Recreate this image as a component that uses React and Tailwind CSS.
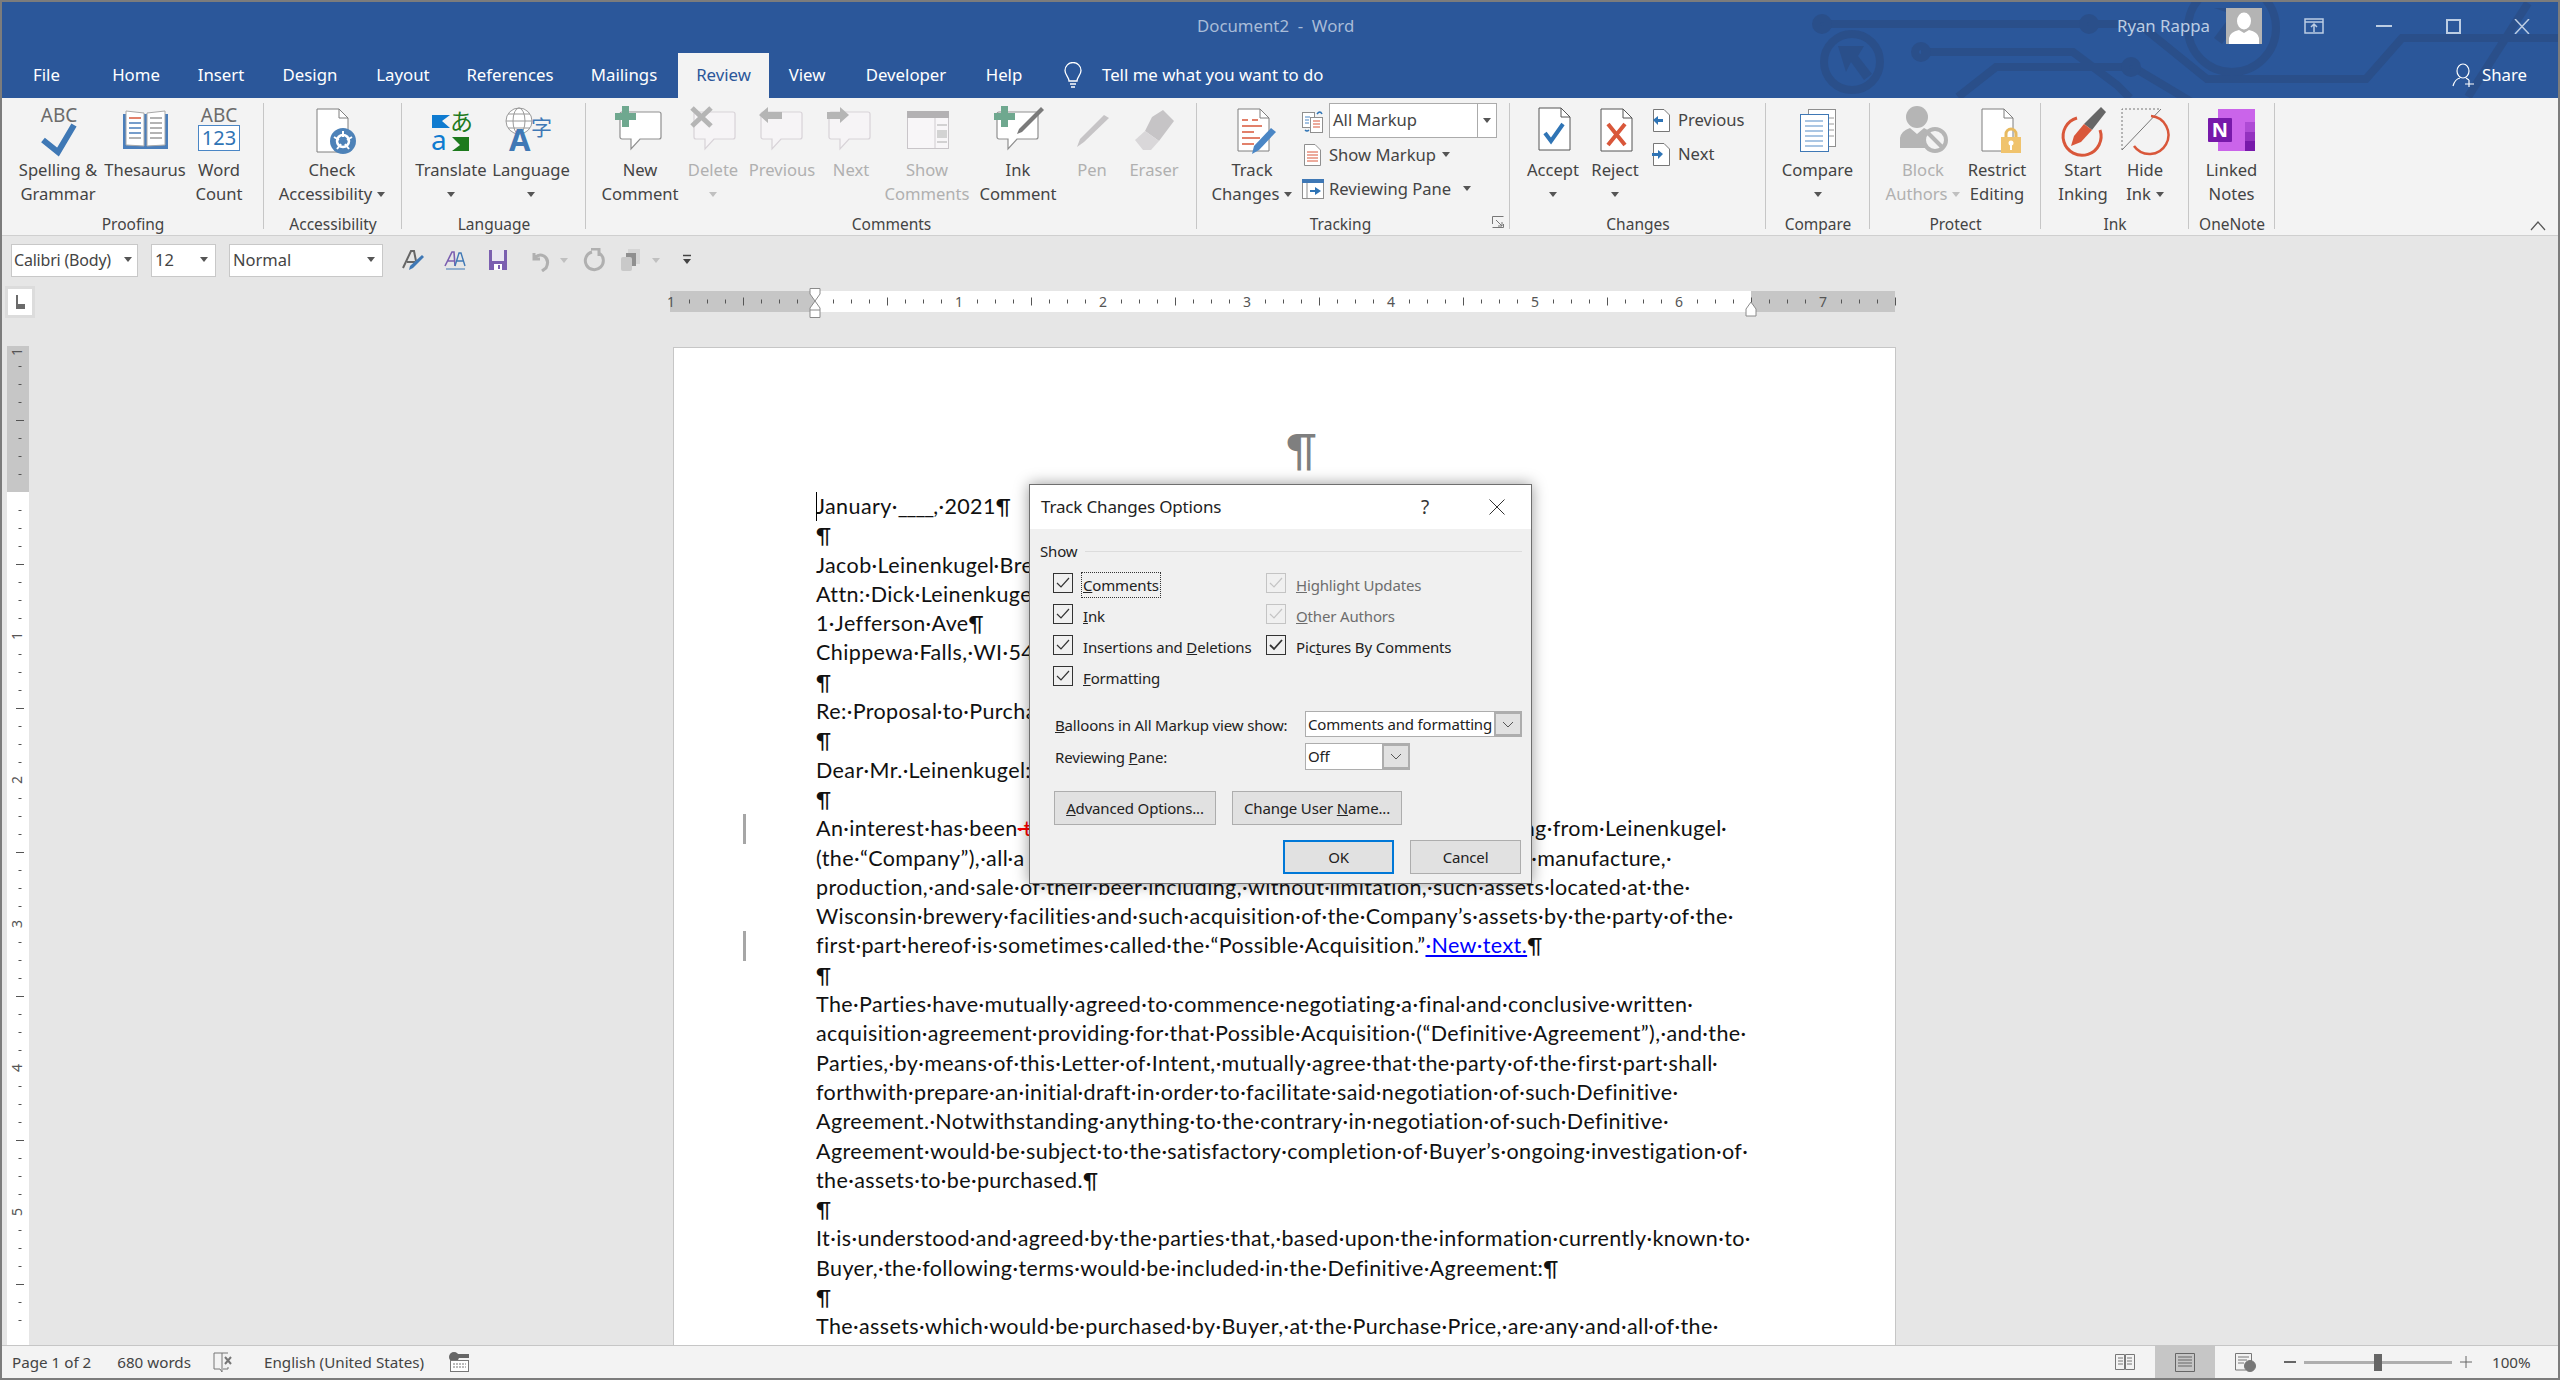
import React from "react";

const Arrow = ({ c = "#555" }) => (
    <svg width="8" height="5" viewBox="0 0 8 5" className="inline-block align-middle">
        <path d="M0 0H8L4 5Z" fill={c} />
    </svg>
);

const Ico = ({ children }) => (
    <svg width="56" height="56" viewBox="0 0 56 56" className="overflow-visible">
        {children}
    </svg>
);

const Page = ({ x, y, w, h, stroke = "#7f7f7f", fill = "#fff" }) => (
    <g>
        <path d={`M${x} ${y}H${x + w - 9}L${x + w} ${y + 9}V${y + h}H${x}Z`} fill={fill} stroke={stroke} strokeWidth="1" />
        <path d={`M${x + w - 9} ${y}V${y + 9}H${x + w}`} fill="none" stroke={stroke} strokeWidth="1" />
    </g>
);

const Bubble = ({ x = 8, stroke = "#8f8f8f", fill = "#fff" }) => (
    <path
        d={`M${x + 2} 8H${x + 39}a2 2 0 0 1 2 2V33a2 2 0 0 1-2 2H${x + 20}L${x + 11} 45V35H${x + 2}a2 2 0 0 1-2-2V10a2 2 0 0 1 2-2Z`}
        fill={fill}
        stroke={stroke}
        strokeWidth="1.2"
    />
);

const Plus = ({ x = 3 }) => (
    <g fill="#6fa88f">
        <rect x={x + 7} y="2" width="7" height="21" />
        <rect x={x} y="9" width="21" height="7" />
    </g>
);

const SpellingIcon = () => (
    <Ico>
        <text x="29" y="18" textAnchor="middle" fontSize="19" fill="#6b6b6b">ABC</text>
        <path d="M13 36L28 48L44 21" fill="none" stroke="#3f78b5" strokeWidth="6" />
    </Ico>
);

const ThesaurusIcon = () => (
    <Ico>
        <path d="M6 10H51V45H6Z" fill="#4a7ebb" />
        <path d="M9 7L27 9V42L9 41Z" fill="#fff" stroke="#a8a8a8" />
        <path d="M48 7L30 9V42L48 41Z" fill="#fff" stroke="#a8a8a8" />
        <path d="M12 14H24" stroke="#d9573a" strokeWidth="1.5" />
        <path d="M12 19H24M12 24H24M12 29H24" stroke="#4a7ebb" strokeWidth="1.5" />
        <path d="M12 34H24M33 14H45M33 19H45M33 24H45M33 29H45M33 34H45" stroke="#9a9a9a" strokeWidth="1.5" />
    </Ico>
);

const WordCountIcon = () => (
    <Ico>
        <text x="28" y="18" textAnchor="middle" fontSize="19" fill="#6b6b6b">ABC</text>
        <rect x="7.5" y="21.5" width="41" height="25" fill="#fff" stroke="#4a86c5" />
        <text x="28" y="41" textAnchor="middle" fontSize="20" fill="#2f74b5">123</text>
    </Ico>
);

const AccessIcon = () => (
    <Ico>
        <Page x={13} y={5} w={31} h={43} />
        <circle cx="39" cy="37" r="13" fill="#4d82b8" />
        <circle cx="39" cy="37" r="6" fill="none" stroke="#fff" strokeWidth="2.5" />
        <path d="M39 27V33M30 33L35 36M48 33L43 36M33 45L37 40M45 45L41 40" stroke="#fff" strokeWidth="2" />
    </Ico>
);

const TranslateIcon = () => (
    <Ico>
        <path d="M9 11V24H27L19 17L27 11Z" fill="#0f7bd0" />
        <text x="27" y="26" fontSize="23" fill="#1d7a1d" fontFamily="'Noto Sans CJK JP',sans-serif">あ</text>
        <text x="8" y="46" fontSize="28" fill="#0f7bd0">a</text>
        <path d="M46 33V47H29L37 41L29 33Z" fill="#1d7a1d" />
    </Ico>
);

const LanguageIcon = () => (
    <Ico>
        <circle cx="16" cy="17" r="13" fill="#fff" stroke="#9a9a9a" />
        <ellipse cx="16" cy="17" rx="6" ry="13" fill="none" stroke="#9a9a9a" />
        <path d="M3 17H29M5 10H27M5 24H27" stroke="#9a9a9a" />
        <text x="6" y="47" fontSize="31" fontWeight="700" fill="#3f78b5">A</text>
        <text x="28" y="31" fontSize="21" fill="#3f78b5" fontFamily="'Noto Sans CJK SC',sans-serif">字</text>
    </Ico>
);

const NewCommentIcon = () => (
    <Ico>
        <Bubble />
        <Plus />
    </Ico>
);

const DeleteIcon = () => (
    <Ico>
        <Bubble x={9} stroke="#d8d3d8" fill="#f6f4f6" />
        <path d="M7 4L26 22M26 4L7 22" stroke="#b5b5b5" strokeWidth="5" />
    </Ico>
);

const PrevIcon = () => (
    <Ico>
        <Bubble x={7} stroke="#d8d3d8" fill="#f6f4f6" />
        <path d="M5 11L14 3V8H28V15H14V19Z" fill="#b5b5b5" />
    </Ico>
);

const NextIcon = () => (
    <Ico>
        <Bubble x={6} stroke="#d8d3d8" fill="#f6f4f6" />
        <path d="M26 11L17 3V8H4V15H17V19Z" fill="#b5b5b5" />
    </Ico>
);

const ShowCommentsIcon = () => (
    <Ico>
        <rect x="8.5" y="7.5" width="41" height="37" fill="#f8f6f8" stroke="#c9c5c9" />
        <rect x="8" y="7" width="42" height="7" fill="#b3b1b3" />
        <path d="M36 14V44" stroke="#d0ccd0" />
        <path d="M38 21H48M38 38H48" stroke="#c5c5c5" strokeWidth="1.5" />
        <rect x="38" y="26" width="10" height="8" fill="#d3d3d3" />
    </Ico>
);

const InkCommentIcon = () => (
    <Ico>
        <Bubble x={7} />
        <Plus x={4} />
        <path d="M51 3L54 6L32 28L27 30L29 25Z" fill="#7a7a7a" />
    </Ico>
);

const PenIcon = () => (
    <Ico>
        <path d="M40 11L45 14L20 38L13 43L16 35Z" fill="#c6c4c6" />
    </Ico>
);

const EraserIcon = () => (
    <Ico>
        <path d="M26 13L37 6L48 17L33 37L19 27Z" fill="#c6c4c6" />
        <path d="M19 27L33 37L25 46H17L9 36Z" fill="#d9d7d9" />
    </Ico>
);

const TrackIcon = () => (
    <Ico>
        <Page x={14} y={5} w={31} h={42} />
        <path d="M18 16H24M28 16H34M18 22H38M18 28H30M18 34H36" stroke="#d9573a" strokeWidth="1.5" />
        <path d="M18 40H30" stroke="#d9573a" strokeWidth="1.5" />
        <path d="M47 24L52 28L35 46L28 50L30 42Z" fill="#4a86c5" />
    </Ico>
);

const AcceptIcon = () => (
    <Ico>
        <Page x={14} y={4} w={31} h={42} stroke="#555" />
        <path d="M20 29L26 37L38 20" fill="none" stroke="#2f74b5" strokeWidth="4" />
    </Ico>
);

const RejectIcon = () => (
    <Ico>
        <Page x={14} y={5} w={31} h={42} stroke="#555" />
        <path d="M21 20L38 41M38 20L21 41" stroke="#d9573a" strokeWidth="4" />
    </Ico>
);

const CompareIcon = () => (
    <Ico>
        <rect x="18.5" y="5.5" width="27" height="37" fill="#fff" stroke="#8f8f8f" />
        <path d="M39 14H44M39 20H44M39 26H44M39 32H44" stroke="#9a9a9a" />
        <rect x="10.5" y="10.5" width="28" height="37" fill="#fff" stroke="#3f78b5" />
        <path d="M15 17H33M15 22H33M15 27H33M15 32H33M15 37H33M15 42H33" stroke="#8fb4da" strokeWidth="1.5" />
    </Ico>
);

const BlockIcon = () => (
    <Ico>
        <ellipse cx="22" cy="13" rx="11" ry="11" fill="#b5b5b5" />
        <path d="M5 44V34Q6 27 15 24L22 30L29 24Q36 27 38 34V44Z" fill="#b5b5b5" />
        <circle cx="40" cy="36" r="11" fill="#f3f3f3" stroke="#b5b5b5" strokeWidth="4" />
        <path d="M33 29L47 43" stroke="#b5b5b5" strokeWidth="4" />
    </Ico>
);

const RestrictIcon = () => (
    <Ico>
        <Page x={13} y={5} w={31} h={42} />
        <path d="M37 34V30a5 5 0 0 1 10 0V34" fill="none" stroke="#e7b95f" strokeWidth="3" />
        <rect x="32" y="33" width="20" height="16" fill="#f0c36d" />
        <circle cx="42" cy="39" r="2.5" fill="#fff" />
        <rect x="41" y="40" width="2" height="6" fill="#fff" />
    </Ico>
);

const StartInkIcon = () => (
    <Ico>
        <path d="M22 14A19 19 0 1 0 45 26" fill="none" stroke="#d9573a" strokeWidth="3" />
        <path d="M46 3L51 8L37 26L29 20Z" fill="#666" />
        <path d="M29 20L37 26L26 38L16 42L19 32Z" fill="#d9573a" />
    </Ico>
);

const HideInkIcon = () => (
    <Ico>
        <path d="M5 46V5H44" fill="none" stroke="#777" strokeWidth="1" strokeDasharray="2 2" />
        <path d="M44 5L5 46" stroke="#777" />
        <path d="M34 12A19 19 0 1 1 17 42" fill="none" stroke="#d9573a" strokeWidth="2.5" />
    </Ico>
);

const OneNoteIcon = () => (
    <Ico>
        <rect x="14" y="5" width="37" height="42" fill="#ca64ea" />
        <rect x="41" y="18" width="10" height="10" fill="#ae4bd5" />
        <rect x="41" y="28" width="10" height="9" fill="#9332bf" />
        <rect x="41" y="37" width="10" height="10" fill="#7719aa" />
        <rect x="4" y="14" width="24" height="24" rx="1" fill="#7719aa" />
        <text x="16" y="33" textAnchor="middle" fontSize="20" fontWeight="700" fill="#fff">N</text>
    </Ico>
);

const Btn = ({ w, icon, a, b, arrow, off }) => (
    <div className={`${w} shrink-0 flex flex-col items-center`}>
        <div className="h-[54px] w-[56px]">{icon}</div>
        <div className={`text-center whitespace-nowrap ${off ? "text-[#b0b0b0]" : "text-[#444]"}`}>
            <div className="h-[24px]">{a}</div>
            <div className="h-[24px] flex items-center justify-center gap-[5px]">
                {b}
                {arrow && <Arrow c={off ? "#c0c0c0" : "#555"} />}
            </div>
        </div>
    </div>
);

const Group = ({ w, pl, label, children, labelCls = "" }) => (
    <div className={`${w} h-[133px] mt-[5px] shrink-0 flex flex-col pt-px relative`}>
        <div className="absolute right-0 top-0 w-px h-[126px] bg-[#c6c6c6]" />
        <div className={`h-[108px] flex ${pl}`}>{children}</div>
        <div className={`h-[24px] leading-[24px] text-center text-[15.5px] text-[#444] whitespace-nowrap ${labelCls}`}>
            {label}
        </div>
    </div>
);

const Ribbon = () => (
    <div className="h-[138px] shrink-0 bg-[#f3f3f3] border-b border-[#cfcfcf] flex text-[16.6px] leading-[24px] relative">
        <Group w="w-[262px]" pl="pl-[13px]" label="Proofing">
            <Btn w="w-[86px]" icon={<SpellingIcon />} a="Spelling &" b="Grammar" />
            <Btn w="w-[88px]" icon={<ThesaurusIcon />} a="Thesaurus" />
            <Btn w="w-[60px]" icon={<WordCountIcon />} a="Word" b="Count" />
        </Group>
        <Group w="w-[138px]" pl="pl-[18px]" label="Accessibility">
            <Btn w="w-[100px]" icon={<AccessIcon />} a="Check" b="Accessibility" arrow />
        </Group>
        <Group w="w-[184px]" pl="pl-[9px]" label="Language">
            <Btn w="w-[80px]" icon={<TranslateIcon />} a="Translate" arrow />
            <Btn w="w-[80px]" icon={<LanguageIcon />} a="Language" arrow />
        </Group>
        <Group w="w-[611px]" pl="pl-[17px]" label="Comments">
            <Btn w="w-[74px]" icon={<NewCommentIcon />} a="New" b="Comment" />
            <Btn w="w-[72px]" icon={<DeleteIcon />} a="Delete" arrow off />
            <Btn w="w-[66px]" icon={<PrevIcon />} a="Previous" off />
            <Btn w="w-[72px]" icon={<NextIcon />} a="Next" off />
            <Btn w="w-[80px]" icon={<ShowCommentsIcon />} a="Show" b="Comments" off />
            <Btn w="w-[102px]" icon={<InkCommentIcon />} a="Ink" b="Comment" />
            <Btn w="w-[46px]" icon={<PenIcon />} a="Pen" off />
            <Btn w="w-[78px]" icon={<EraserIcon />} a="Eraser" off />
        </Group>
        <Group w="w-[313px]" pl="pl-[5px]" label="Tracking" labelCls="pr-[26px]">
            <Btn w="w-[100px]" icon={<TrackIcon />} a="Track" b="Changes" arrow />
            <div className="flex flex-col text-[#444]">
                <div className="h-[34px] flex items-center">
                    <svg width="22" height="24" viewBox="0 0 22 24" className="shrink-0">
                        <rect x="0.5" y="3.5" width="12" height="15" fill="#fff" stroke="#8f8f8f" />
                        <rect x="8.5" y="8.5" width="12" height="15" fill="#fff" stroke="#8f8f8f" />
                        <path d="M11 12H18M11 15H18M11 18H18" stroke="#d9573a" />
                        <path d="M3 8H8M3 11H7M3 14H7" stroke="#4a86c5" />
                        <path d="M15 5Q18 1 20 5M3 21Q5 23 7 21" fill="none" stroke="#2f74b5" strokeWidth="1.5" />
                    </svg>
                    <div className="ml-[5px] w-[168px] h-[35px] -mt-[2px] bg-white border border-[#ababab] flex items-center pl-[3px]">
                        <span className="flex-1">All Markup</span>
                        <div className="w-[19px] h-full border-l border-[#ababab] flex items-center justify-center">
                            <Arrow />
                        </div>
                    </div>
                </div>
                <div className="h-[34px] flex items-center">
                    <svg width="22" height="22" viewBox="0 0 22 22" className="shrink-0">
                        <path d="M2.5 0.5H13L18.5 6V21.5H2.5Z" fill="#fff" stroke="#8f8f8f" />
                        <path d="M5 8H16M5 11H16M5 14H16M5 17H16" stroke="#d9573a" />
                    </svg>
                    <span className="ml-[5px]">Show Markup</span>
                    <span className="ml-[6px] -mt-[2px] flex"><Arrow /></span>
                </div>
                <div className="h-[34px] flex items-center">
                    <svg width="22" height="20" viewBox="0 0 22 20" className="shrink-0">
                        <rect x="0.5" y="0.5" width="21" height="19" fill="#fff" stroke="#8f8f8f" />
                        <rect x="0" y="0" width="22" height="4" fill="#3f78b5" />
                        <path d="M5 4V19" stroke="#8f8f8f" />
                        <path d="M8 11H13V8L19 12L13 16V13H8Z" fill="#2f74b5" />
                    </svg>
                    <span className="ml-[5px]">Reviewing Pane</span>
                    <span className="ml-[12px] -mt-[2px] flex"><Arrow /></span>
                </div>
            </div>
            <svg width="12" height="12" viewBox="0 0 12 12" className="absolute right-[6px] top-[113px]">
                <path d="M0.5 8V0.5H11.5" fill="none" stroke="#777" />
                <path d="M4 4L10 10M10 6V10H6M0.5 11.5H11.5V8" fill="none" stroke="#777" />
            </svg>
        </Group>
        <Group w="w-[256px]" pl="pl-[12px]" label="Changes">
            <Btn w="w-[62px]" icon={<AcceptIcon />} a="Accept" arrow />
            <Btn w="w-[62px]" icon={<RejectIcon />} a="Reject" arrow />
            <div className="flex flex-col pl-[6px] -mt-[1px] text-[#444]">
                {["Previous", "Next"].map((t, i) => (
                    <div key={t} className="h-[34px] flex items-center">
                        <svg width="18" height="23" viewBox="0 0 18 23" className="shrink-0">
                            <path d="M1.5 0.5H12L17.5 6V22.5H1.5Z" fill="#fff" stroke="#777" />
                            <path
                                d={i === 0 ? "M1 11L6 7V10H11V13H6V16Z" : "M11 11L6 7V10H0V13H6V16Z"}
                                fill="#2f74b5"
                            />
                        </svg>
                        <span className="ml-[8px]">{t}</span>
                    </div>
                ))}
            </div>
        </Group>
        <Group w="w-[104px]" pl="" label="Compare">
            <Btn w="w-[103px]" icon={<CompareIcon />} a="Compare" arrow />
        </Group>
        <Group w="w-[171px]" pl="pl-[16px]" label="Protect">
            <Btn w="w-[74px]" icon={<BlockIcon />} a="Block" b="Authors" arrow off />
            <Btn w="w-[74px]" icon={<RestrictIcon />} a="Restrict" b="Editing" />
        </Group>
        <Group w="w-[148px]" pl="pl-[11px]" label="Ink">
            <Btn w="w-[62px]" icon={<StartInkIcon />} a="Start" b="Inking" />
            <Btn w="w-[62px]" icon={<HideInkIcon />} a="Hide" b="Ink" arrow />
        </Group>
        <Group w="w-[86px]" pl="" label="OneNote">
            <Btn w="w-[85px]" icon={<OneNoteIcon />} a="Linked" b="Notes" />
        </Group>
        <svg width="16" height="10" viewBox="0 0 16 10" className="absolute right-[12px] bottom-[4px]">
            <path d="M1 9L8 1L15 9" fill="none" stroke="#555" strokeWidth="1.2" />
        </svg>
    </div>
);

const Circuit = () => (
    <svg className="absolute inset-0" width="2556" height="96" viewBox="2 2 2556 96">
        <g fill="none" stroke="#2a4f8a" strokeWidth="8">
            <path d="M1818 24H2089" />
            <circle cx="1822" cy="24" r="6" />
            <circle cx="2089" cy="24" r="6" />
            <path d="M2089 24H2139L2207 79H2366L2402 38H2560" />
            <circle cx="1852" cy="62" r="28" />
            <path d="M1921 52H2073L2117 85L2130 98" />
            <circle cx="1921" cy="52" r="6" />
            <path d="M1958 97L1996 67H2133L2205 110" />
            <circle cx="2131" cy="67" r="6" />
            <circle cx="2232" cy="28" r="44" />
            <path d="M2468 97L2528 3" />
        </g>
        <path d="M1838 46H1864L1858 56L1872 74L1864 80L1851 62L1846 72Z" fill="#2a4f8a" />
        <path d="M2214 8H2250V30L2240 20L2222 44L2214 38L2232 14Z" fill="#2a4f8a" />
    </svg>
);

const Tab = ({ w, children }) => (
    <div className={`${w} shrink-0 text-center leading-[43px] text-[#fff]`}>{children}</div>
);

const TitleBand = () => (
    <div className="h-[96px] shrink-0 bg-[#2b579a] relative overflow-hidden text-[16.8px]">
        <Circuit />
        <div className="relative h-[51px] flex items-center pb-[3px]">
            <div className="ml-[1195px] text-[#a9bcd8] whitespace-pre">Document2  -  Word</div>
            <div className="ml-auto flex items-center">
                <span className="text-[#bccde3]">Ryan Rappa</span>
                <div className="ml-[16px] w-[36px] h-[36px] bg-[#b4b4b4] overflow-hidden">
                    <svg width="36" height="36" viewBox="0 0 36 36">
                        <ellipse cx="18" cy="13" rx="7" ry="8.5" fill="#fff" />
                        <path d="M3 36V30Q4 24 13 22L18 25L23 22Q32 24 33 30V36Z" fill="#fff" />
                    </svg>
                </div>
                <svg width="20" height="16" viewBox="0 0 20 16" className="ml-[42px]" fill="none" stroke="#bccde3" strokeWidth="1.5">
                    <rect x="1" y="1" width="18" height="14" />
                    <path d="M1 4H19M10 14V6M7 9L10 6L13 9" />
                </svg>
                <div className="ml-[52px] w-[16px] h-[2px] bg-[#bccde3]" />
                <div className="ml-[54px] w-[15px] h-[15px] border-2 border-[#bccde3]" />
                <svg width="16" height="15" viewBox="0 0 16 15" className="ml-[53px] mr-[28px]" stroke="#bccde3" strokeWidth="1.5">
                    <path d="M1 0L15 15M15 0L1 15" />
                </svg>
            </div>
        </div>
        <div className="relative h-[45px] flex">
            <Tab w="w-[89px]">File</Tab>
            <Tab w="w-[90px]">Home</Tab>
            <Tab w="w-[80px]">Insert</Tab>
            <Tab w="w-[98px]">Design</Tab>
            <Tab w="w-[88px]">Layout</Tab>
            <Tab w="w-[126px]">References</Tab>
            <Tab w="w-[102px]">Mailings</Tab>
            <div className="ml-[3px] w-[91px] shrink-0 text-center leading-[43px] bg-[#f3f3f3] text-[#2b579a]">Review</div>
            <Tab w="w-[76px]">View</Tab>
            <Tab w="w-[122px]">Developer</Tab>
            <Tab w="w-[74px]">Help</Tab>
            <div className="ml-[22px] flex items-center pb-[2px]">
                <svg width="20" height="26" viewBox="0 0 20 26" fill="none" stroke="#fff" strokeWidth="1.3">
                    <path d="M6 19C6 15 2 13 2 8.5A8 8 0 0 1 18 8.5C18 13 14 15 14 19Z" />
                    <path d="M7 22H13M8 25H12" />
                </svg>
                <span className="ml-[19px] text-white">Tell me what you want to do</span>
            </div>
            <div className="ml-auto mr-[31px] flex items-center pb-[2px]">
                <svg width="24" height="24" viewBox="0 0 24 24" fill="none" stroke="#fff" strokeWidth="1.2">
                    <ellipse cx="11" cy="8" rx="6" ry="7" />
                    <path d="M1 23Q3 16 8 15M14 15L17 17M17 17V24M13 21H22" />
                </svg>
                <span className="ml-[6px] text-white">Share</span>
            </div>
        </div>
    </div>
);

const Qat = () => (
    <div className="h-[50px] shrink-0 flex items-center pb-[2px] pl-[9px] text-[16.5px] text-[#444]">
        <div className="w-[127px] h-[33px] bg-white border border-[#c8c8c8] flex items-center pl-[2px] pr-[5px] whitespace-nowrap">
            <span className="flex-1 text-[16px] tracking-[-0.2px]">Calibri (Body)</span>
            <span className="flex -mt-[2px]"><Arrow /></span>
        </div>
        <div className="ml-[13px] w-[65px] h-[33px] bg-white border border-[#c8c8c8] flex items-center pl-[3px] pr-[7px]">
            <span className="flex-1">12</span>
            <span className="flex -mt-[2px]"><Arrow /></span>
        </div>
        <div className="ml-[13px] w-[154px] h-[33px] bg-white border border-[#c8c8c8] flex items-center pl-[3px] pr-[7px]">
            <span className="flex-1">Normal</span>
            <span className="flex -mt-[2px]"><Arrow /></span>
        </div>
        <svg width="24" height="24" viewBox="0 0 24 24" className="ml-[18px]">
            <path d="M2 20L10 3H13L15 13M6 14H14" fill="none" stroke="#666" strokeWidth="2" />
            <path d="M21 7L23 9L12 20L8 22L9 18Z" fill="#3f78b5" />
        </svg>
        <svg width="24" height="24" viewBox="0 0 24 24" className="ml-[18px]">
            <path d="M2 18L9 4H11L12 18M5 13H12" fill="none" stroke="#7b5fb0" strokeWidth="1.6" />
            <path d="M12 18L16 5H18L22 18M14 13H20" fill="none" stroke="#3f78b5" strokeWidth="1.4" />
            <path d="M3 21H22" stroke="#3f78b5" />
        </svg>
        <svg width="24" height="24" viewBox="0 0 24 24" className="ml-[19px]">
            <path d="M3 2H21V22H3Z" fill="#7b5fb0" />
            <rect x="6" y="2" width="12" height="11" fill="#e9e6f2" />
            <rect x="8" y="16" width="8" height="6" fill="#fff" />
            <rect x="12" y="17" width="2" height="4" fill="#7b5fb0" />
        </svg>
        <svg width="24" height="24" viewBox="0 0 24 24" className="ml-[18px]" fill="none">
            <path d="M6 5V11H12M6 11Q10 5 16 8Q22 12 18 20L14 23" stroke="#b0b0b0" strokeWidth="3" />
        </svg>
        <span className="ml-[8px] flex"><Arrow c="#c0c0c0" /></span>
        <svg width="24" height="24" viewBox="0 0 24 24" className="ml-[14px]" fill="none">
            <path d="M10 4A9 9 0 1 0 17 5M9 1H17V8" stroke="#b0b0b0" strokeWidth="3" />
        </svg>
        <svg width="24" height="24" viewBox="0 0 24 24" className="ml-[13px]">
            <rect x="9" y="1" width="12" height="15" fill="#d5d5d5" />
            <rect x="7" y="5" width="10" height="13" fill="#8f8f8f" />
            <rect x="2" y="9" width="11" height="14" rx="2" fill="#c9c9c9" />
        </svg>
        <span className="ml-[9px] flex"><Arrow c="#c0c0c0" /></span>
        <svg width="10" height="12" viewBox="0 0 10 12" className="ml-[22px]">
            <path d="M1 1.5H9" stroke="#444" strokeWidth="1.5" />
            <path d="M1 5H9L5 10Z" fill="#444" />
        </svg>
    </div>
);

const hTicks = Array.from({ length: 69 }, (_, i) => i - 8);
const HRuler = () => (
    <svg width="1225" height="32" viewBox="0 0 1225 32" className="ml-[635px] shrink-0 overflow-visible">
        <rect x="0" y="5" width="145" height="21" fill="#c6c6c6" />
        <rect x="145" y="5" width="936" height="21" fill="#fff" />
        <rect x="1081" y="5" width="144" height="21" fill="#c6c6c6" />
        {hTicks.map((i) => {
            const x = 145 + i * 18;
            if (i % 8 === 0) {
                if (i === 0) return null;
                return (
                    <text key={i} x={x} y="21" textAnchor="middle" fontSize="14" fill="#555">
                        {Math.abs(i / 8)}
                    </text>
                );
            }
            const h = i % 4 === 0 ? 8 : 4;
            return <rect key={i} x={x} y={15.5 - h / 2} width="1" height={h} fill="#555" />;
        })}
        <path d="M140 2.5H150V8L145 15L140 8ZM145 15L150 22V31.5H140V22ZM140 24H150" fill="#fff" stroke="#8a8a8a" />
        <path d="M1081 16L1086 23V30H1076V23Z" fill="#fff" stroke="#8a8a8a" />
    </svg>
);

// top "1" sits at y=2 and spills over the ruler edge, as in Word
const vTicks = Array.from({ length: 55 }, (_, i) => i - 8);
const VRuler = () => (
    <svg width="22" height="999" viewBox="0 0 22 999" className="ml-[5px] mt-[28px] shrink-0 overflow-visible">
        <rect x="0" y="0" width="22" height="146" fill="#c6c6c6" />
        <rect x="0" y="146" width="22" height="853" fill="#fff" />
        {vTicks.map((i) => {
            const y = 146 + i * 18;
            if (i % 8 === 0) {
                if (i === 0) return null;
                const ty = i === -8 ? y + 4 : y;
                return (
                    <text key={i} x="11" y={ty + 4} textAnchor="middle" fontSize="14" fill="#555" transform={`rotate(-90 11 ${ty})`}>
                        {Math.abs(i / 8)}
                    </text>
                );
            }
            const w = i % 4 === 0 ? 8 : 3;
            return <rect key={i} x={13 - w / 2} y={y} width={w} height="1" fill="#555" />;
        })}
    </svg>
);

const Bar = () => <span className="absolute left-[-73px] top-0 w-[3px] h-[30px] bg-[#a6a6a6]" />;

const Line = ({ children, cls = "" }) => (
    <div className={`h-[29.3px] leading-[29.3px] whitespace-nowrap relative ${cls}`}>{children}</div>
);

const DocPage = () => (
    <div className="ml-[644px] mt-[29px] w-[1223px] shrink-0 bg-white border border-b-0 border-[#c6c6c6] relative font-['Lato',sans-serif] text-[21.5px] tracking-[0.39px] text-[#111] pl-[142px] overflow-hidden">
        <div className="h-[144px] pl-[470px] pt-[76px] text-[44px] leading-[50px] text-[#7f7f7f]">¶</div>
        <Line>
            <span className="absolute left-0 top-0 w-px h-[29px] bg-black" />
            January·<span className="tracking-[-1px]">____</span>,·2021¶
        </Line>
        <Line>¶</Line>
        <Line>Jacob·Leinenkugel·Brewing·Company¶</Line>
        <Line>Attn:·Dick·Leinenkugel¶</Line>
        <Line>1·Jefferson·Ave¶</Line>
        <Line>Chippewa·Falls,·WI·54729¶</Line>
        <Line>¶</Line>
        <Line>Re:·Proposal·to·Purchase·Assets¶</Line>
        <Line>¶</Line>
        <Line>Dear·Mr.·Leinenkugel:¶</Line>
        <Line>¶</Line>
        <Line cls="flex justify-between w-[911px]">
            <Bar />
            <span>
                An·interest·has·been<span className="text-[#ff0000] line-through">·to</span>
            </span>
            <span>ing·from·Leinenkugel·</span>
        </Line>
        <Line cls="flex justify-between w-[856px]">
            <span>(the·“Company”),·all·a</span>
            <span>·manufacture,·</span>
        </Line>
        <Line>production,·and·sale·of·their·beer·including,·without·limitation,·such·assets·located·at·the·</Line>
        <Line>Wisconsin·brewery·facilities·and·such·acquisition·of·the·Company’s·assets·by·the·party·of·the·</Line>
        <Line>
            <Bar />
            first·part·hereof·is·sometimes·called·the·“Possible·Acquisition.”
            <span className="text-[#0000ff] underline">·New·text.</span>¶
        </Line>
        <Line>¶</Line>
        <Line>The·Parties·have·mutually·agreed·to·commence·negotiating·a·final·and·conclusive·written·</Line>
        <Line>acquisition·agreement·providing·for·that·Possible·Acquisition·(“Definitive·Agreement”),·and·the·</Line>
        <Line>Parties,·by·means·of·this·Letter·of·Intent,·mutually·agree·that·the·party·of·the·first·part·shall·</Line>
        <Line>forthwith·prepare·an·initial·draft·in·order·to·facilitate·said·negotiation·of·such·Definitive·</Line>
        <Line>Agreement.·Notwithstanding·anything·to·the·contrary·in·negotiation·of·such·Definitive·</Line>
        <Line>Agreement·would·be·subject·to·the·satisfactory·completion·of·Buyer’s·ongoing·investigation·of·</Line>
        <Line>the·assets·to·be·purchased.¶</Line>
        <Line>¶</Line>
        <Line>It·is·understood·and·agreed·by·the·parties·that,·based·upon·the·information·currently·known·to·</Line>
        <Line>Buyer,·the·following·terms·would·be·included·in·the·Definitive·Agreement:¶</Line>
        <Line>¶</Line>
        <Line>The·assets·which·would·be·purchased·by·Buyer,·at·the·Purchase·Price,·are·any·and·all·of·the·</Line>
    </div>
);

const Check = ({ off, bold }) => (
    <span className={`w-[20px] h-[20px] shrink-0 border flex items-center justify-center ${off ? "border-[#c4c4c4]" : "border-[#333]"}`}>
        <svg width="14" height="12" viewBox="0 0 14 12" fill="none">
            <path d="M1 6L5 10L13 1" stroke={off ? "#c4c4c4" : "#333"} strokeWidth={bold ? 1.8 : 1.2} />
        </svg>
    </span>
);

const Opt = ({ off, bold, children, focus }) => (
    <div className="h-[31px] flex items-start">
        <Check off={off} bold={bold} />
        <span className={`ml-[10px] leading-[24px] whitespace-nowrap ${off ? "text-[#6d6d6d]" : ""}`}>
            {focus ? (
                <span className="-ml-px outline-1 outline-dotted outline-[#333] block px-px">{children}</span>
            ) : (
                children
            )}
        </span>
    </div>
);

const Chevron = () => (
    <svg width="12" height="7" viewBox="0 0 12 7" fill="none">
        <path d="M1 1L6 6L11 1" stroke="#555" />
    </svg>
);

const Dialog = () => (
    <div className="absolute left-[1027px] top-[482px] w-[503px] h-[400px] bg-[#f0f0f0] border border-[#6f6f6f] shadow-[0_0_14px_rgba(0,0,0,0.4)] text-[15px] tracking-[-0.16px] text-[#222] font-['Noto_Sans',sans-serif]">
        <div className="h-[44px] bg-white flex items-center pl-[11px] text-[17px]">
            <span className="flex-1">Track Changes Options</span>
            <span className="mr-[60px] text-[#333] text-[19px]">?</span>
            <svg width="16" height="16" viewBox="0 0 16 16" className="mr-[26px]" stroke="#333">
                <path d="M0.5 0.5L15.5 15.5M15.5 0.5L0.5 15.5" />
            </svg>
        </div>
        <div className="mt-[10px] h-[24px] flex items-center pl-[10px] pr-[9px]">
            <span>Show</span>
            <div className="ml-[8px] flex-1 h-px bg-[#dcdcdc]" />
        </div>
        <div className="mt-[10px] pl-[23px] flex">
            <div className="w-[213px]">
                <Opt focus><u>C</u>omments</Opt>
                <Opt><u>I</u>nk</Opt>
                <Opt>Insertions and <u>D</u>eletions</Opt>
                <Opt><u>F</u>ormatting</Opt>
            </div>
            <div>
                <Opt off><u>H</u>ighlight Updates</Opt>
                <Opt off><u>O</u>ther Authors</Opt>
                <Opt bold>Pic<u>t</u>ures By Comments</Opt>
            </div>
        </div>
        <div className="mt-[14px] pl-[25px] flex h-[26px]">
            <span className="w-[250px] leading-[28px]"><u>B</u>alloons in All Markup view show:</span>
            <div className="w-[217px] bg-white border border-[#adadad] flex items-center pl-[2px]">
                <span className="flex-1 whitespace-nowrap">Comments and formatting</span>
                <div className="w-[28px] h-full bg-[#e1e1e1] border-2 border-[#adadad] flex items-center justify-center -mr-px">
                    <Chevron />
                </div>
            </div>
        </div>
        <div className="mt-[6px] pl-[25px] flex h-[27px]">
            <span className="w-[250px] leading-[28px]">Reviewing <u>P</u>ane:</span>
            <div className="w-[105px] bg-white border border-[#adadad] flex items-center pl-[2px]">
                <span className="flex-1">Off</span>
                <div className="w-[28px] h-full bg-[#e1e1e1] border-2 border-[#adadad] flex items-center justify-center -mr-px">
                    <Chevron />
                </div>
            </div>
        </div>
        <div className="mt-[21px] pl-[24px] flex">
            <div className="w-[162px] h-[34px] bg-[#e1e1e1] border border-[#adadad] flex items-center justify-center"><span><u>A</u>dvanced Options...</span></div>
            <div className="ml-[16px] w-[170px] h-[34px] bg-[#e1e1e1] border border-[#adadad] flex items-center justify-center"><span>Change User <u>N</u>ame...</span></div>
        </div>
        <div className="mt-[15px] pl-[253px] flex">
            <div className="w-[111px] h-[34px] bg-[#e1e1e1] border-2 border-[#0078d7] flex items-center justify-center">OK</div>
            <div className="ml-[16px] w-[111px] h-[34px] bg-[#e1e1e1] border border-[#adadad] flex items-center justify-center">Cancel</div>
        </div>
    </div>
);

const StatusBar = () => (
    <div className="h-[33px] shrink-0 bg-[#f3f3f3] border-t border-[#c6c6c6] flex items-center text-[15.2px] text-[#444] whitespace-nowrap">
        <span className="ml-[10px]">Page 1 of 2</span>
        <span className="ml-[26px]">680 words</span>
        <svg width="20" height="22" viewBox="0 0 20 22" className="ml-[22px]" fill="none" stroke="#777">
            <path d="M9 2H1V18L7 18L9 21V2ZM9 2H15M15 16V18H10" />
            <path d="M12 6L18 13M18 6L12 13" strokeWidth="2" />
        </svg>
        <span className="ml-[31px]">English (United States)</span>
        <svg width="22" height="20" viewBox="0 0 22 20" className="ml-[24px]">
            <circle cx="6" cy="5" r="5" fill="#666" />
            <rect x="8" y="2" width="13" height="4" fill="#666" />
            <rect x="2.5" y="8.5" width="18" height="11" fill="#fff" stroke="#777" />
            <path d="M5 12H18M5 15H18" stroke="#777" strokeDasharray="2 1" />
        </svg>
        <div className="ml-auto flex items-center h-full">
            <svg width="20" height="19" viewBox="0 0 20 19" fill="none" stroke="#777">
                <path d="M0.5 1.5H9.5V16.5H0.5ZM10.5 1.5H19.5V16.5H10.5ZM3 5H8M3 8H8M3 11H8M12 5H17M12 8H17M12 11H17" />
            </svg>
            <div className="ml-[20px] w-[60px] h-full bg-[#c6c6c6] flex items-center justify-center">
                <svg width="20" height="19" viewBox="0 0 20 19" fill="none" stroke="#666">
                    <path d="M0.5 0.5H19.5V18.5H0.5ZM3 4H17M3 7H17M3 10H17M3 13H17" />
                </svg>
            </div>
            <svg width="21" height="19" viewBox="0 0 21 19" className="ml-[20px]" fill="none" stroke="#777">
                <path d="M11 17H0.5V0.5H16.5V8M3 4H14M3 7H12M3 10H9" />
                <circle cx="15" cy="13" r="5.5" fill="#777" />
            </svg>
            <div className="ml-[28px] w-[12px] h-[2px] bg-[#666]" />
            <div className="ml-[8px] w-[148px] h-[3px] bg-[#aeaeae] relative">
                <div className="absolute left-[70px] top-[-7px] w-[8px] h-[17px] bg-[#666]" />
            </div>
            <svg width="12" height="12" viewBox="0 0 12 12" className="ml-[8px]" stroke="#666">
                <path d="M0 6H12M6 0V12" />
            </svg>
            <span className="ml-[20px] mr-[28px] w-[38px]">100%</span>
        </div>
    </div>
);

export default function App() {
    return (
        <div className="w-[2560px] h-[1380px] relative overflow-hidden border-2 border-[#7c7c7c] flex flex-col bg-[#e6e6e6] font-['Noto_Sans',sans-serif]">
            <TitleBand />
            <Ribbon />
            <Qat />
            <div className="h-[32px] shrink-0 flex">
                <div className="ml-[3px] w-[30px] h-[32px] bg-[#dcdcdc] p-[3px] shrink-0">
                    <div className="w-full h-full bg-white flex items-center justify-center">
                        <svg width="10" height="14" viewBox="0 0 10 14">
                            <path d="M1 0H3V9H10V14H1Z" fill="#6b6b6b" />
                        </svg>
                    </div>
                </div>
                <HRuler />
            </div>
            <div className="flex-1 flex overflow-hidden">
                <VRuler />
                <DocPage />
            </div>
            <StatusBar />
            <Dialog />
        </div>
    );
}
